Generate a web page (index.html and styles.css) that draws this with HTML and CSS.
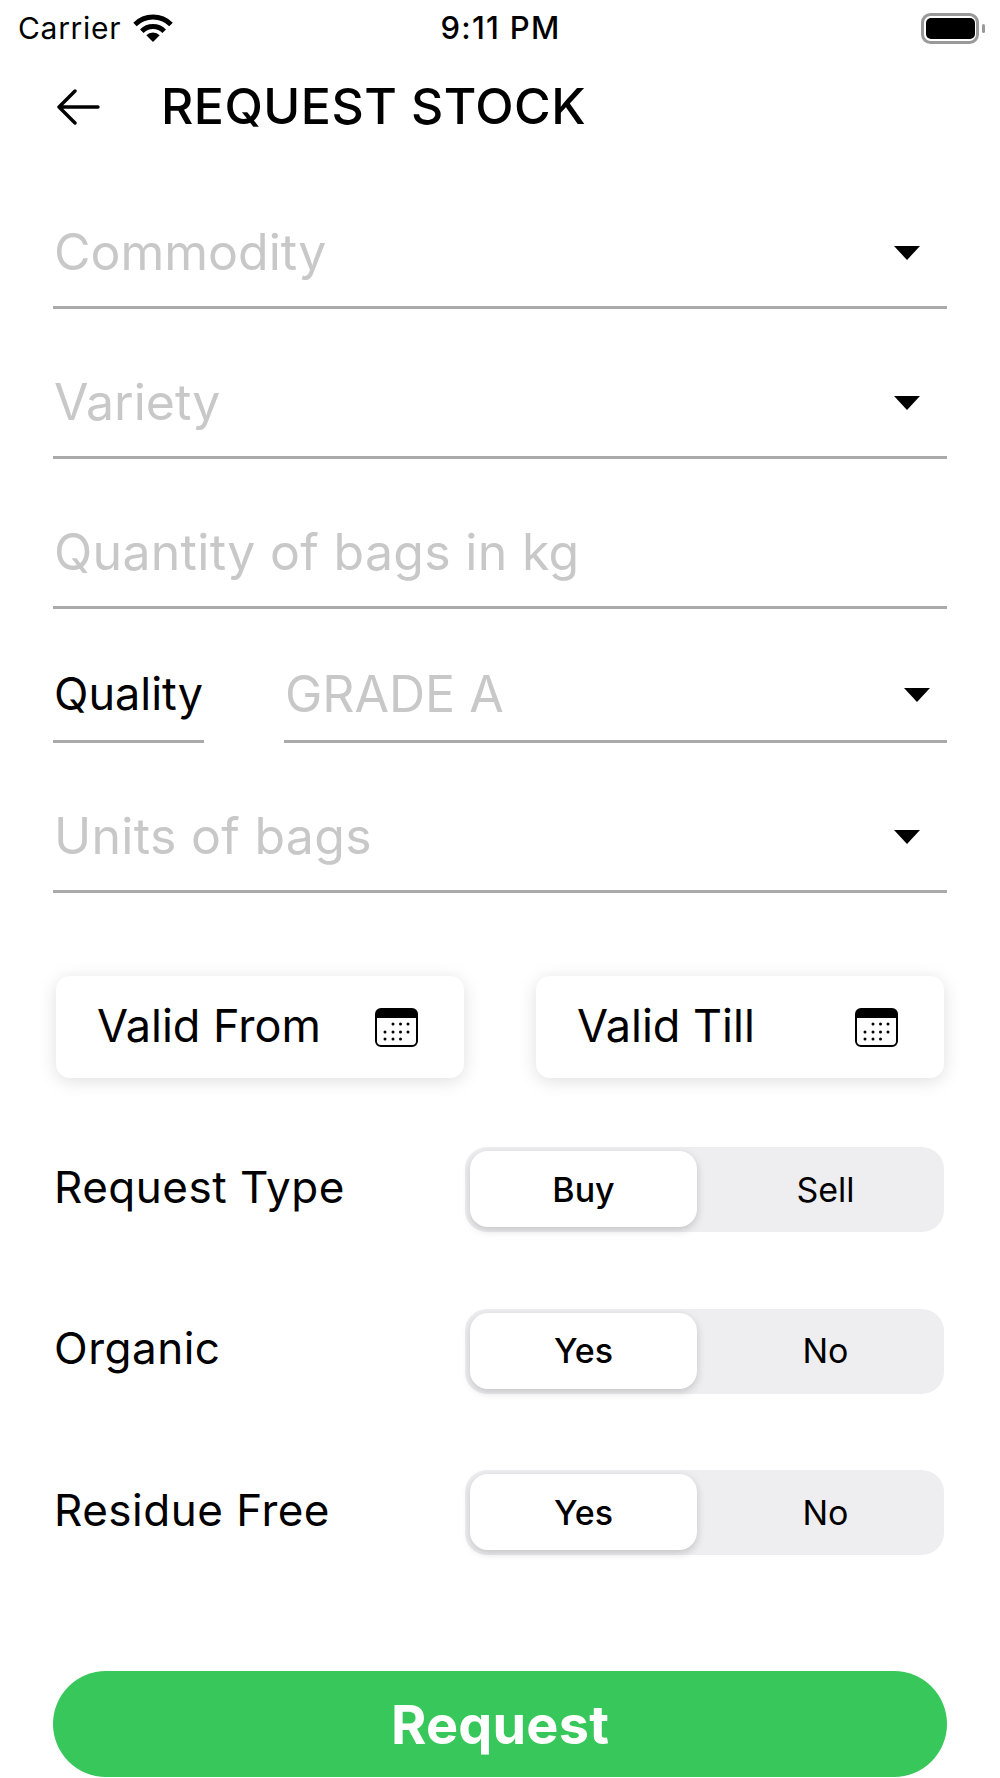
FILE: index.html
```html
<!DOCTYPE html>
<html lang="en">
<head>
<meta charset="utf-8">
<title>Request Stock</title>
<link rel="stylesheet" href="styles.css">
</head>
<body>
<div class="screen">
  <div class="statusbar">
    <div class="status-left">
      <span class="carrier">Carrier</span>
      <svg class="wifi" viewBox="0 0 40 29"><path d="M2 11.4A25.5 25.5 0 0 1 38 11.4" fill="none" stroke="#000" stroke-width="5"/><path d="M8.8 18.2A15.8 15.8 0 0 1 31.2 18.2" fill="none" stroke="#000" stroke-width="5"/><path d="M20 29L13.3 22.3A9.5 9.5 0 0 1 26.7 22.3Z"/></svg>
    </div>
    <span class="clock">9:11 PM</span>
    <div class="status-right">
      <svg class="battery" viewBox="0 0 65 31"><rect x="1.5" y="1.5" width="55" height="28" rx="8" fill="none" stroke="#999" stroke-width="3"/><rect x="5" y="5" width="49" height="21" rx="5"/><rect x="61" y="11" width="3" height="9" rx="1.5" fill="#999"/></svg>
    </div>
  </div>
  <div class="header">
    <svg class="back" viewBox="0 0 44 36"><path d="M42 18H3M19 2L3 18L19 34" fill="none" stroke="#000" stroke-width="3.4" stroke-linecap="round" stroke-linejoin="round"/></svg>
    <h1 class="title">REQUEST STOCK</h1>
  </div>
  <div class="form">
    <div class="field"><span class="placeholder">Commodity</span><span class="caret"></span></div>
    <div class="field"><span class="placeholder">Variety</span><span class="caret"></span></div>
    <div class="field"><span class="placeholder placeholder-wide">Quantity of bags in kg</span></div>
    <div class="quality-row">
      <div class="quality-label">Quality</div>
      <div class="quality-value"><span class="grade">GRADE A</span><span class="caret caret-grade"></span></div>
    </div>
    <div class="field field-units"><span class="placeholder placeholder-wide">Units of bags</span><span class="caret"></span></div>

    <div class="dates">
      <div class="date-card"><span>Valid From</span>
        <svg class="calendar" viewBox="0 0 43 39"><use href="#cal"/></svg>
      </div>
      <div class="date-card"><span>Valid Till</span>
        <svg class="calendar" viewBox="0 0 43 39"><use href="#cal"/></svg>
      </div>
    </div>

    <div class="option-row">
      <span class="option-label">Request Type</span>
      <div class="segment"><span class="seg seg-on">Buy</span><span class="seg">Sell</span></div>
    </div>
    <div class="option-row">
      <span class="option-label">Organic</span>
      <div class="segment"><span class="seg seg-on">Yes</span><span class="seg">No</span></div>
    </div>
    <div class="option-row">
      <span class="option-label">Residue Free</span>
      <div class="segment"><span class="seg seg-on">Yes</span><span class="seg">No</span></div>
    </div>
    <div class="submit">Request</div>
  </div>
</div>
<svg class="defs" width="0" height="0">
  <symbol id="cal" viewBox="0 0 43 39">
    <rect x="1" y="1" width="41" height="37" rx="5" fill="#fff" stroke="#000" stroke-width="2"/>
    <path d="M1 10V6a5 5 0 0 1 5-5H37a5 5 0 0 1 5 5V10Z"/>
    <g>
      <circle cx="18" cy="16" r="1.5"/><circle cx="25.5" cy="16" r="1.5"/><circle cx="33" cy="16" r="1.5"/>
      <circle cx="10" cy="24" r="1.5"/><circle cx="18" cy="24" r="1.5"/><circle cx="25.5" cy="24" r="1.5"/><circle cx="33" cy="24" r="1.5"/>
      <circle cx="10" cy="31" r="1.5"/><circle cx="18" cy="31" r="1.5"/><circle cx="25.5" cy="31" r="1.5"/>
    </g>
  </symbol>
</svg>
</body>
</html>
```
FILE: styles.css
```css
* { box-sizing: border-box; }
html, body { margin: 0; padding: 0; background: #fff; }
body { font-family: Inter, "Liberation Sans", sans-serif; color: #000; }
.defs { position: absolute; }
.screen { width: 1000px; height: 1778px; overflow: hidden; display: flex; flex-direction: column; }

.statusbar { height: 56px; display: grid; grid-template-columns: 1fr auto 1fr; align-items: center; padding: 0 14px 0 18px; }
.status-left { display: flex; align-items: center; gap: 12px; }
.carrier { font-size: 30px; letter-spacing: 0.7px; line-height: 56px; }
.wifi { width: 40px; height: 29px; margin-top: -1px; }
.clock { font-size: 31px; letter-spacing: 1.3px; font-weight: 500; line-height: 56px; margin-left: -3px; }
.status-right { display: flex; justify-content: flex-end; }
.battery { width: 65px; height: 31px; }

.header { height: 103px; display: flex; align-items: center; padding: 0 0 0 56px; }
.back { width: 44px; height: 36px; margin-top: -1px; }
.title { margin: -3px 0 0 61px; font-size: 50px; font-weight: 500; letter-spacing: 0.45px; line-height: 60px; }

.form { padding: 0 53px; display: flex; flex-direction: column; }
.field { height: 150px; border-bottom: 3px solid #aaa; display: flex; justify-content: space-between; align-items: flex-end; padding: 0 27px 25px 1px; }
.placeholder { font-size: 50px; line-height: 58px; color: #c8c8c8; }
.placeholder-wide { letter-spacing: 0.3px; }
.caret { width: 0; height: 0; border-left: 13px solid transparent; border-right: 13px solid transparent; border-top: 14px solid #000; margin-bottom: 21px; }

.quality-row { height: 134px; display: flex; align-items: flex-end; gap: 80px; }
.quality-label { width: 151px; height: 100%; border-bottom: 3px solid #aaa; display: flex; align-items: flex-end; padding: 0 0 20px 1px; font-size: 45px; line-height: 52px; }
.quality-value { flex: 1; height: 100%; border-bottom: 3px solid #aaa; display: flex; justify-content: space-between; align-items: flex-end; padding: 0 17px 20px 1px; }
.grade { font-size: 50px; line-height: 52px; color: #c8c8c8; }
.caret-grade { margin-bottom: 18px; }

.dates { display: flex; justify-content: space-between; padding: 0 3px; margin-top: 83px; }
.date-card { width: 408px; height: 102px; background: #fff; border-radius: 14px; box-shadow: 0 3px 18px rgba(0,0,0,.13); display: flex; justify-content: space-between; align-items: center; padding: 0 46px 0 41px; font-size: 45px; line-height: 52px; }
.date-card span { margin-top: -3px; }
.calendar { width: 43px; height: 39px; }

.option-row { display: flex; justify-content: space-between; align-items: center; padding: 0 3px; margin-top: 69px; }
.option-row + .option-row { margin-top: 76.5px; }
.option-label { font-size: 44px; letter-spacing: 0.5px; line-height: 52px; margin: -6px 0 0 -2px; }
.segment { width: 479px; height: 85px; background: #eeeef0; border-radius: 22px; padding: 4px 5px 5px; display: flex; }
.seg { flex: 0 0 227px; border-radius: 18px; display: flex; align-items: center; justify-content: center; font-size: 34px; }
.seg + .seg { flex: 1; padding-left: 15px; }
.seg-on { background: #fff; font-weight: 500; box-shadow: 0 3px 8px rgba(0,0,0,.18); }

.submit { margin-top: 116px; height: 106px; background: #37c75b; border-radius: 53px; color: #fff; font-size: 54px; font-weight: 700; letter-spacing: 0.2px; display: flex; align-items: center; justify-content: center; }
```
